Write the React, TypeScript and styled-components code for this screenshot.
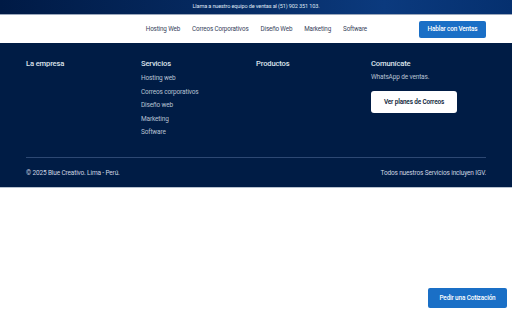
import React from 'react';
import styled, { createGlobalStyle } from 'styled-components';

const GlobalStyle = createGlobalStyle`
	html, body {
		margin: 0;
		padding: 0;
		background: #ffffff;
		font-family: Roboto, 'Open Sans', sans-serif;
	}
	* {
		box-sizing: border-box;
	}
`;

const Page = styled.div`
	width: 512px;
	min-height: 315px;
	position: relative;
	letter-spacing: -0.15px;
`;

const TopBar = styled.div`
	height: 15px;
	background: linear-gradient(90deg, #001a45 0%, #062b63 45%, #0b3a7e 75%, #05306f 100%);
	border-bottom: 1px solid #9aa7bb;
	display: flex;
	align-items: center;
	justify-content: center;
	color: #dfe6f1;
	font-size: 5.6px;
	padding-bottom: 3px;
`;

const Nav = styled.nav`
	height: 28px;
	background: #ffffff;
	display: flex;
	align-items: center;
	justify-content: flex-end;
	padding: 0 26px 0 0;
`;

const NavLinks = styled.div`
	display: flex;
	gap: 12px;
	margin-right: 52px;
`;

const NavLink = styled.a`
	font-size: 6.3px;
	color: #36425a;
	text-decoration: none;
`;

const BlueButton = styled.button`
	border: none;
	border-radius: 2px;
	background: #1a6fc6;
	color: #ffffff;
	font-family: inherit;
	letter-spacing: inherit;
	font-size: 6.4px;
	font-weight: 500;
	padding: 0;
	width: ${(p: { $w: number; $h: number }) => p.$w}px;
	height: ${(p) => p.$h}px;
`;

const Footer = styled.footer`
	background: #001c45;
	padding: 16px 26px 0;
	height: 145px;
	border-bottom: 1px solid #b7c2d0;
`;

const Columns = styled.div`
	display: grid;
	grid-template-columns: repeat(4, 115px);
	height: 98px;
`;

const Column = styled.div`
	display: flex;
	flex-direction: column;
	align-items: flex-start;
`;

const ColTitle = styled.h4`
	margin: 0 0 3px;
	font-size: 7.6px;
	font-weight: 500;
	color: #dde3ec;
	line-height: 10px;
`;

const ColLink = styled.a`
	font-size: 6.5px;
	color: #b9c3d3;
	line-height: 13.6px;
	text-decoration: none;
`;

const ColText = styled.p`
	margin: 1px 0 10px;
	font-size: 6.5px;
	color: #b9c3d3;
	line-height: 8px;
`;

const WhiteButton = styled.button`
	border: none;
	border-radius: 3px;
	background: #ffffff;
	color: #0d1e3a;
	font-family: inherit;
	letter-spacing: inherit;
	font-size: 6.4px;
	font-weight: 600;
	width: 86px;
	height: 22px;
	padding: 0;
`;

const Divider = styled.hr`
	margin: 0;
	border: none;
	border-top: 1px solid #2d4873;
`;

const Bottom = styled.div`
	display: flex;
	justify-content: space-between;
	align-items: center;
	height: 30px;
	font-size: 6.5px;
	color: #cdd5e1;
`;

const Floating = styled.div`
	position: absolute;
	right: 5px;
	top: 285px;
`;

const services = ['Hosting web', 'Correos corporativos', 'Diseño web', 'Marketing', 'Software'];
const navItems = ['Hosting Web', 'Correos Corporativos', 'Diseño Web', 'Marketing', 'Software'];

export default function App() {
	return (
		<Page>
			<GlobalStyle />
			<TopBar>Llama a nuestro equipo de ventas al (51) 902 351 103.</TopBar>
			<Nav>
				<NavLinks>
					{navItems.map((item) => (
						<NavLink key={item}>{item}</NavLink>
					))}
				</NavLinks>
				<BlueButton $w={67} $h={17}>
					Hablar con Ventas
				</BlueButton>
			</Nav>
			<Footer>
				<Columns>
					<Column>
						<ColTitle>La empresa</ColTitle>
					</Column>
					<Column>
						<ColTitle>Servicios</ColTitle>
						{services.map((s) => (
							<ColLink key={s}>{s}</ColLink>
						))}
					</Column>
					<Column>
						<ColTitle>Productos</ColTitle>
					</Column>
					<Column>
						<ColTitle>Comunícate</ColTitle>
						<ColText>WhatsApp de ventas.</ColText>
						<WhiteButton>Ver planes de Correos</WhiteButton>
					</Column>
				</Columns>
				<Divider />
				<Bottom>
					<span>© 2025 Blue Creativo. Lima - Perú.</span>
					<span>Todos nuestros Servicios incluyen IGV.</span>
				</Bottom>
			</Footer>
			<Floating>
				<BlueButton $w={79} $h={20}>
					Pedir una Cotización
				</BlueButton>
			</Floating>
		</Page>
	);
}
